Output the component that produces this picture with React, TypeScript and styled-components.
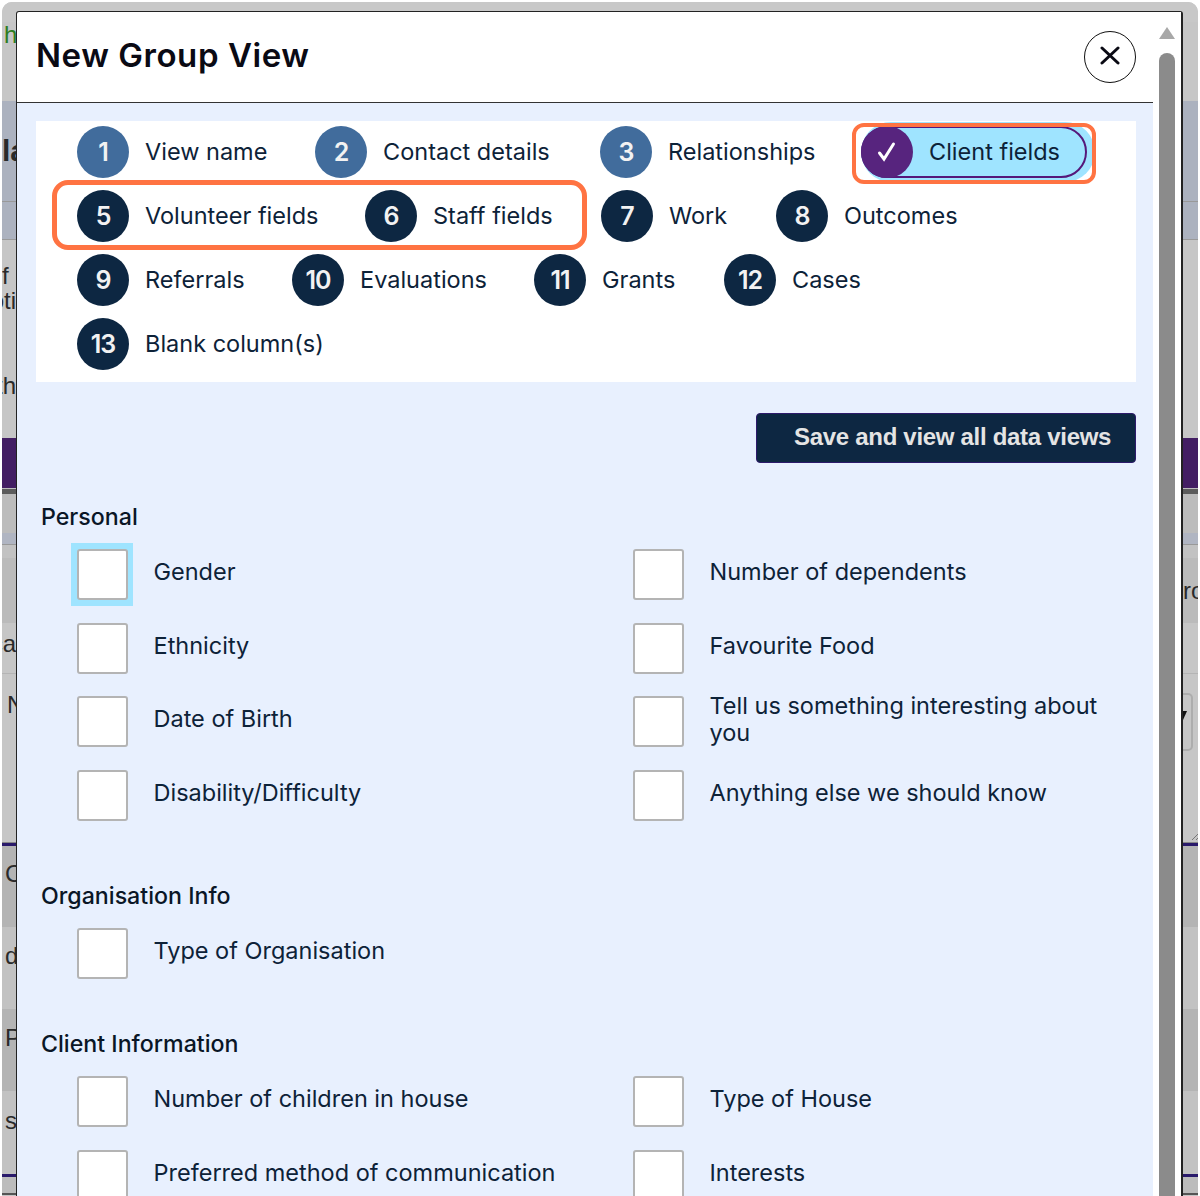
import React from "react";
import styled, { createGlobalStyle } from "styled-components";

const Global = createGlobalStyle`
  html, body { margin: 0; padding: 0; background: #fff; }
  body { font-family: "Inter", "Liberation Sans", sans-serif; overflow: hidden; }
  * { box-sizing: border-box; }
`;

const Screen = styled.div`
  position: relative;
  width: 1200px;
  height: 1196px;
  overflow: hidden;
  background: #fff;
`;

const Backdrop = styled.div`
  position: absolute;
  inset: 2px 2px 0 2px;
  display: flex;
  flex-direction: column;
  background: #c6c6c6;
  border-radius: 10px 10px 0 0;
  overflow: hidden;
  font-family: "Liberation Sans", sans-serif;
`;

const Band = styled.div<{ $h: number; $c: string }>`
  height: ${(p) => p.$h}px;
  background: ${(p) => p.$c};
  flex: none;
  display: grid;
  grid-template-columns: 14px 1167px 1fr;
  align-items: center;
  overflow: hidden;
`;

const LeftPeek = styled.span<{ $bold?: boolean; $tone?: string; $x?: number; $top?: boolean }>`
  grid-column: 1;
  grid-row: 1;
  justify-self: ${(p) => (p.$x === undefined ? "end" : "start")};
  align-self: ${(p) => (p.$top ? "start" : "center")};
  margin-left: ${(p) => p.$x ?? 0}px;
  white-space: nowrap;
  font-size: ${(p) => (p.$bold ? 30 : 24)}px;
  font-weight: ${(p) => (p.$bold ? 700 : 400)};
  line-height: 1;
  color: ${(p) => p.$tone ?? "#2a2a2a"};
`;

const RightPeek = styled.span`
  grid-column: 3;
  grid-row: 1;
  justify-self: start;
  white-space: nowrap;
  font-size: 24px;
  line-height: 1;
  color: #2a2a2a;
`;

const SelectEdge = styled.span`
  grid-column: 3;
  grid-row: 1;
  justify-self: start;
  position: relative;
  width: 10px;
  height: 100%;
  border: 2px solid #adadad;
  border-left: 0;
  border-radius: 0 5px 5px 0;
`;

const SelectCaret = styled.svg`
  position: absolute;
  left: -1px;
  top: 16px;
`;

const Grip = styled.svg`
  grid-column: 3;
  grid-row: 1;
  justify-self: start;
  margin-left: 9px;
`;

const Modal = styled.section`
  position: absolute;
  left: 16px;
  top: 11px;
  width: 1167px;
  height: 1185px;
  background: #fff;
  border: 1px solid #222;
  border-right-width: 2px;
  border-bottom: 0;
  border-radius: 3px 3px 0 0;
  display: flex;
`;

const Main = styled.div`
  width: 1136px;
  flex: none;
  display: flex;
  flex-direction: column;
`;

const Header = styled.header`
  height: 91px;
  flex: none;
  border-bottom: 1px solid #333;
  display: flex;
  align-items: center;
  justify-content: space-between;
  padding: 0 17px 0 19px;
`;

const Title = styled.h1`
  margin: -4px 0 0;
  font-size: 33px;
  font-weight: 600;
  color: #0a0a14;
  letter-spacing: 0.55px;
`;

const Close = styled.button`
  width: 52px;
  height: 52px;
  border-radius: 50%;
  border: 1px solid #111;
  background: #fff;
  padding: 0 0 4px;
  display: flex;
  align-items: center;
  justify-content: center;
  color: #0a0a14;
`;

const Body = styled.div`
  flex: 1;
  background: #e8f0fe;
  padding: 18px 17px 0 19px;
  overflow: hidden;
`;

const Steps = styled.nav`
  background: #fff;
  height: 261px;
  padding: 5px 0 0 41px;
  display: flex;
  flex-direction: column;
  gap: 12px;
`;

const StepRow = styled.div`
  display: flex;
  height: 52px;
  align-items: center;
`;

const Step = styled.div<{ $w: number }>`
  width: ${(p) => p.$w}px;
  flex: none;
  display: flex;
  align-items: center;
  gap: 16px;
  font-size: 23.5px;
  color: #0d2238;
  white-space: nowrap;
`;

const StepLabel = styled.span`
  margin-bottom: 2px;
`;

const Dot = styled.span<{ $done?: boolean }>`
  width: 52px;
  height: 52px;
  border-radius: 50%;
  flex: none;
  background: ${(p) => (p.$done ? "#416c9c" : "#0d2742")};
  color: #f2f2f2;
  font-size: 25px;
  font-weight: 600;
  letter-spacing: -1px;
  display: flex;
  align-items: center;
  justify-content: center;
`;

const Active = styled.div`
  width: 226px;
  height: 52px;
  margin-left: -1px;
  border-radius: 26px;
  background: #9fe4ff;
  border: 2px solid #55187a;
  display: flex;
  align-items: center;
  font-size: 23.5px;
  color: #0d2238;
  white-space: nowrap;
  box-shadow: 4px 0 0 4px #9fe4ff;
`;

const ActiveDot = styled.span`
  width: 52px;
  height: 52px;
  margin-left: -2px;
  margin-right: 16px;
  border-radius: 50%;
  background: #57247e;
  color: #fff;
  display: flex;
  align-items: center;
  justify-content: center;
  flex: none;
`;

const Highlight = styled.div`
  position: absolute;
  border: 5px solid #ff7342;
  border-radius: 16px;
  pointer-events: none;
`;

const HighlightA = styled(Highlight)`
  left: 35px;
  top: 168px;
  width: 535px;
  height: 70px;
`;

const HighlightB = styled(Highlight)`
  left: 835px;
  top: 111px;
  width: 244px;
  height: 61px;
  border-width: 4px;
  border-radius: 12px;
`;

const Actions = styled.div`
  display: flex;
  justify-content: flex-end;
  margin-top: 31px;
`;

const Save = styled.button`
  width: 380px;
  height: 50px;
  background: #0d2742;
  border: 1px solid #2d1a6b;
  border-radius: 4px;
  color: #e4e4e4;
  font-family: "Liberation Sans", sans-serif;
  font-size: 24px;
  font-weight: 700;
  letter-spacing: -0.3px;
  text-align: left;
  padding: 0 0 2px 37px;
`;

const Heading = styled.h2<{ $top: number }>`
  margin: ${(p) => p.$top}px 0 0 5px;
  font-size: 23.2px;
  line-height: 30px;
  font-weight: 530;
  color: #0a1626;
`;

const Fields = styled.div<{ $top: number }>`
  margin: ${(p) => p.$top}px 0 0 41px;
  display: grid;
  grid-template-columns: 556px 1fr;
  row-gap: 21.7px;
`;

const Field = styled.label`
  display: flex;
  gap: 25.5px;
  align-items: center;
  height: 52px;
`;

const Box = styled.span`
  display: block;
  width: 51px;
  height: 51px;
  flex: none;
  align-self: flex-start;
  background: #fff;
  border: 2px solid #b4b4b4;
  border-radius: 3px;
`;

const FocusRing = styled.span`
  display: block;
  flex: none;
  align-self: flex-start;
  padding: 6px 5px 6px 6px;
  margin: -6px -5px -6px -6px;
  background: #9fe4ff;
`;

const FieldText = styled.span`
  font-size: 23.5px;
  line-height: 27px;
  color: #0d2238;
  width: 410px;
  margin-bottom: 7px;
`;

const Rail = styled.aside`
  flex: 1;
  padding: 15px 0 0 6px;
  display: flex;
  flex-direction: column;
  gap: 14px;
  background: #fff;
`;

const Thumb = styled.div`
  width: 16px;
  flex: 1;
  background: #8b8b8b;
  border-radius: 8px 8px 0 0;
`;

const stepRows: [string, string, number, boolean][][] = [
  [["1", "View name", 238, true], ["2", "Contact details", 285, true], ["3", "Relationships", 262, true]],
  [["5", "Volunteer fields", 288, false], ["6", "Staff fields", 236, false], ["7", "Work", 175, false], ["8", "Outcomes", 220, false]],
  [["9", "Referrals", 215, false], ["10", "Evaluations", 242, false], ["11", "Grants", 190, false], ["12", "Cases", 200, false]],
  [["13", "Blank column(s)", 300, false]],
];

const personal = [
  "Gender", "Number of dependents",
  "Ethnicity", "Favourite Food",
  "Date of Birth", "Tell us something interesting about you",
  "Disability/Difficulty", "Anything else we should know",
];

type BandDef = {
  h: number;
  c: string;
  left?: string;
  x?: number;
  top?: boolean;
  bold?: boolean;
  tone?: string;
  right?: string;
  select?: boolean;
  grip?: boolean;
};

const grey = "#c6c6c6";
const bands: BandDef[] = [
  { h: 20, c: "#c8c8c8" },
  { h: 26, c: grey, left: "h", x: 2, tone: "#2e7d1e" },
  { h: 53, c: grey },
  { h: 100, c: "#acb2bf", left: "la", x: 0, bold: true },
  { h: 1, c: "#999" },
  { h: 37, c: "#acb2bf" },
  { h: 1, c: "#9a9a9a" },
  { h: 23, c: grey },
  { h: 25, c: grey, left: "f", x: 0 },
  { h: 25, c: grey, left: "oti" },
  { h: 60, c: grey },
  { h: 26, c: grey, left: "th" },
  { h: 39, c: grey },
  { h: 50, c: "#431e63" },
  { h: 1, c: "#bbb" },
  { h: 5, c: "#5c5c5c" },
  { h: 39, c: "#bcbcbc" },
  { h: 11, c: "#b0b5c2" },
  { h: 1, c: "#999" },
  { h: 13, c: "#c2c2c2" },
  { h: 65, c: "#bbbbbb", right: "ro" },
  { h: 6, c: grey },
  { h: 30, c: grey, left: "ca" },
  { h: 14, c: grey },
  { h: 1, c: "#b4b4b4" },
  { h: 19, c: grey },
  { h: 58, c: grey, select: true, left: "N", x: 5, top: true },
  { h: 78, c: grey },
  { h: 13, c: grey, grip: true },
  { h: 1, c: "#888" },
  { h: 3, c: "#2a1a6b" },
  { h: 15, c: "#b4b4b4" },
  { h: 26, c: "#b4b4b4", left: "C", x: 3 },
  { h: 40, c: "#b4b4b4" },
  { h: 16, c: "#c2c2c2" },
  { h: 26, c: "#c2c2c2", left: "d", x: 3 },
  { h: 40, c: "#c2c2c2" },
  { h: 16, c: "#b4b4b4" },
  { h: 26, c: "#b4b4b4", left: "P", x: 3 },
  { h: 40, c: "#b4b4b4" },
  { h: 17, c: "#c2c2c2" },
  { h: 26, c: "#c2c2c2", left: "s", x: 3 },
  { h: 40, c: "#c2c2c2" },
  { h: 3, c: "#2a1a6b" },
  { h: 16, c: "#bcbcbc" },
  { h: 2, c: "#555" },
];

export default function App() {
  return (
    <Screen>
      <Global />
      <Backdrop aria-hidden>
        {bands.map((b, i) => (
          <Band key={i} $h={b.h} $c={b.c}>
            {b.left && (
              <LeftPeek $bold={b.bold} $tone={b.tone} $x={b.x} $top={b.top}>
                {b.left}
              </LeftPeek>
            )}
            {b.right && <RightPeek>{b.right}</RightPeek>}
            {b.select && (
              <SelectEdge>
                <SelectCaret width="5" height="9" viewBox="0 0 5 9">
                  <path d="M0 0h5L1 9H0z" fill="#111" />
                </SelectCaret>
              </SelectEdge>
            )}
            {b.grip && (
              <Grip width="7" height="8" viewBox="0 0 7 8" fill="none" stroke="#777" strokeWidth="1">
                <path d="M0 8l7-7M4 8l3-3" />
              </Grip>
            )}
          </Band>
        ))}
      </Backdrop>
      <Modal>
        <Main>
          <Header>
            <Title>New Group View</Title>
            <Close aria-label="Close">
              <svg width="20" height="19" viewBox="0 0 20 19" fill="none" stroke="currentColor" strokeWidth="3" strokeLinecap="round">
                <path d="M2 2l16 15M18 2L2 17" />
              </svg>
            </Close>
          </Header>
          <Body>
            <Steps>
              {stepRows.map((row, i) => (
                <StepRow key={i}>
                  {row.map(([n, label, w, done]) => (
                    <Step key={n} $w={w}>
                      <Dot $done={done}>{n}</Dot>
                      <StepLabel>{label}</StepLabel>
                    </Step>
                  ))}
                  {i === 0 && (
                    <Active>
                      <ActiveDot>
                        <svg width="20" height="22" viewBox="0 0 20 22" fill="none" stroke="currentColor" strokeWidth="3" strokeLinecap="round">
                          <path d="M2.5 12l4.5 6L16.5 3" />
                        </svg>
                      </ActiveDot>
                      <StepLabel>Client fields</StepLabel>
                    </Active>
                  )}
                </StepRow>
              ))}
            </Steps>
            <Actions>
              <Save>Save and view all data views</Save>
            </Actions>
            <Heading $top={39}>Personal</Heading>
            <Fields $top={17}>
              {personal.map((t, i) => (
                <Field key={t}>
                  {i === 0 ? (
                    <FocusRing>
                      <Box />
                    </FocusRing>
                  ) : (
                    <Box />
                  )}
                  <FieldText>{t}</FieldText>
                </Field>
              ))}
            </Fields>
            <Heading $top={59}>Organisation Info</Heading>
            <Fields $top={17}>
              <Field>
                <Box />
                <FieldText>Type of Organisation</FieldText>
              </Field>
            </Fields>
            <Heading $top={49}>Client Information</Heading>
            <Fields $top={17}>
              {["Number of children in house", "Type of House", "Preferred method of communication", "Interests"].map((t) => (
                <Field key={t}>
                  <Box />
                  <FieldText>{t}</FieldText>
                </Field>
              ))}
            </Fields>
          </Body>
          <HighlightA />
          <HighlightB />
        </Main>
        <Rail>
          <svg width="16" height="12" viewBox="0 0 16 12">
            <path d="M8 0l8 12H0z" fill="#a8a8a8" />
          </svg>
          <Thumb />
        </Rail>
      </Modal>
    </Screen>
  );
}
